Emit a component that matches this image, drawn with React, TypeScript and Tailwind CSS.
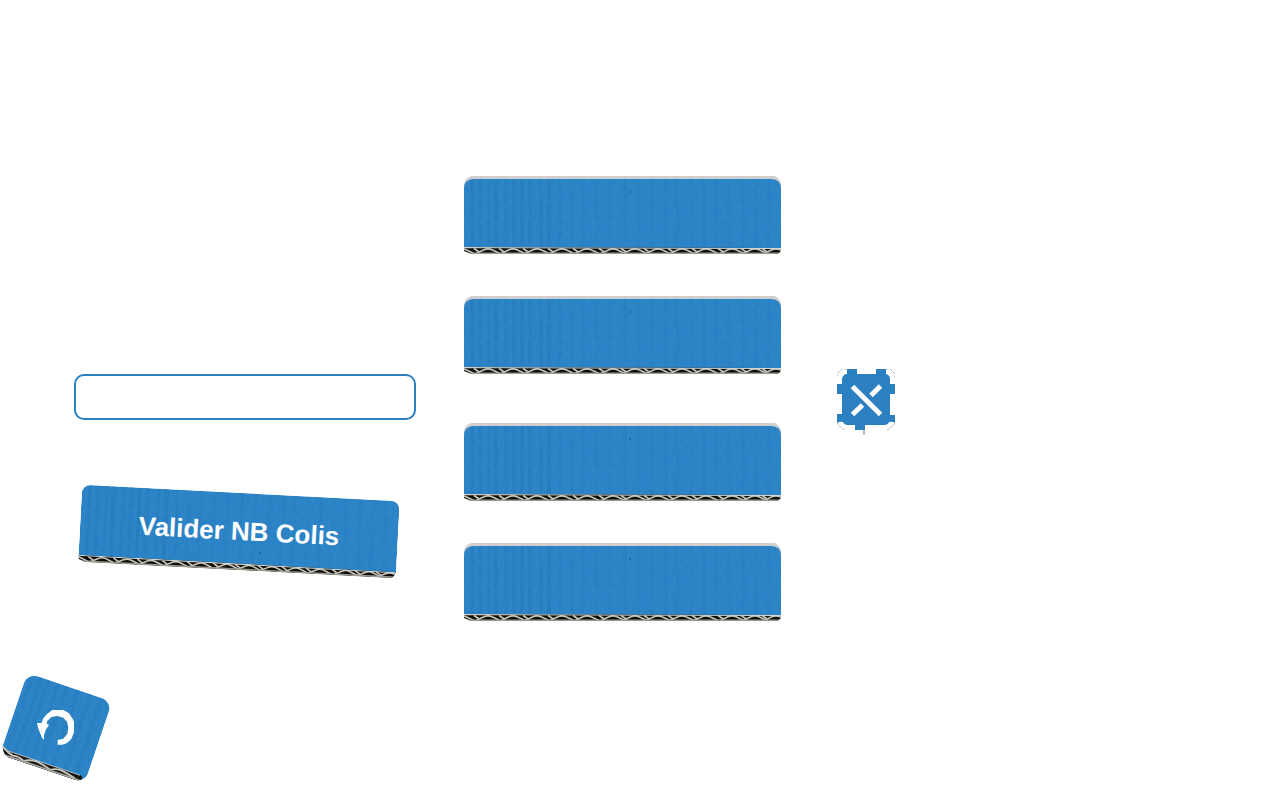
import { useId, useState } from "react";

const FLUTES = [
  -2, 24, 49, 73, 98, 123, 149, 171, 194, 218, 242, 268, 291, 312, 336,
];
const RIDGES = [
  8, 16, 25, 32, 42, 50, 58, 66, 77, 85, 96, 108, 119, 133, 146, 161, 174, 188,
  202, 213, 227, 240, 252, 265, 279, 292, 305,
];

function Grain({ id }: { id: string }) {
  return (
    <filter id={id} x="0" y="0" width="100%" height="100%">
      <feTurbulence
        type="fractalNoise"
        baseFrequency="0.3 0.18"
        numOctaves={3}
        seed={4}
      />
      <feColorMatrix values="0 0 0 0 0.05  0 0 0 0 0.28  0 0 0 0 0.52  1.2 0 0 0 -0.42" />
      <feComposite in2="SourceGraphic" operator="in" />
    </filter>
  );
}

function Cardboard({ topEdge = false }: { topEdge?: boolean }) {
  const id = useId().replace(/[^a-zA-Z0-9]/g, "");
  const face = topEdge
    ? "M0 73V13Q0 3 10 3H307Q317 3 317 13V73Z"
    : "M0 73V11Q0 1 10 1H308Q318 1 318 11V73Z";
  return (
    <svg
      viewBox="0 0 318 78"
      className="block h-[78px] w-full"
      aria-hidden="true"
    >
      <defs>
        <Grain id={`grain${id}`} />
        <clipPath id={`face${id}`}>
          <path d={face} />
        </clipPath>
        <clipPath id={`edge${id}`}>
          <path d="M0 71L317 72V74Q316 78 311 78H7L0 75Z" />
        </clipPath>
      </defs>
      {topEdge && (
        <path d="M0 12V7L2 3L7 0H311L315 3L317 7V14H0Z" fill="#cfcfcf" />
      )}
      <g clipPath={`url(#face${id})`}>
        <rect width="318" height="78" fill="#2b83c8" />
        {RIDGES.map((x, i) => (
          <path
            key={x}
            d={`M${x} 0V78`}
            stroke={i % 3 === 0 ? "#2377b8" : "#277bbd"}
            strokeWidth={i % 2 ? 4 : 3}
            opacity={x < 100 ? 0.55 : 0.3}
          />
        ))}
        <rect
          width="318"
          height="78"
          fill="#2b82c6"
          filter={`url(#grain${id})`}
          opacity="0.6"
        />
        <circle
          cx={topEdge ? 166 : 181}
          cy={topEdge ? 16 : 60}
          r="1"
          fill="#1764a4"
        />
      </g>
      <g clipPath={`url(#edge${id})`}>
        <rect y="70" width="318" height="9" fill="#0f0d0a" />
        {FLUTES.map((x) => (
          <path
            key={x}
            d={`M${x - 14} 72.5L${x - 8} 76.5M${x - 12} 77.5L${x - 4} 73.8Q${x} 72 ${x + 4} 73.8L${x + 12} 77.5`}
            fill="none"
            stroke="#c9c7bd"
            strokeWidth="1.6"
          />
        ))}
        <path d="M0 71.5L317 72.5" stroke="#d5d6d0" strokeWidth="1.3" />
        <path d="M0 77.2H317" stroke="#9a9a90" strokeWidth="1.6" />
      </g>
    </svg>
  );
}

function CrossIcon() {
  return (
    <svg
      viewBox="0 0 58 66"
      className="block h-[66px] w-[58px]"
      aria-hidden="true"
    >
      <path
        d="M0 8V5L5 0H10M49 0H53L58 5V9M0 53L2 57L8 61M50 61L56 57L58 54"
        fill="none"
        stroke="#b9b9b9"
        strokeWidth="1"
        strokeDasharray="3 1"
      />
      <path
        d="M10 0H20V5H39V0H49V5Q53 6 53 10V15H58V25H53V46H58V54Q55 52 52 53Q51 56 47 56H28V61H18V56H11Q7 56 6 53Q3 52 0 54V45H5V25H0V15H5V10Q6 5 10 5Z"
        fill="#2b80c2"
      />
      <path
        d="M15.5 17.5L43.5 45.5M43.5 17L34 26.5M15.5 45.5L25.5 36"
        fill="none"
        stroke="#fff"
        strokeWidth="5"
      />
      <path d="M27 61V66" stroke="#b9b9b9" strokeWidth="2" />
    </svg>
  );
}

function BackIcon() {
  return (
    <svg
      viewBox="0 0 112 110"
      className="block h-[110px] w-[112px]"
      aria-hidden="true"
    >
      <defs>
        <Grain id="backGrain" />
        <clipPath id="backShape">
          <rect x="-44.5" y="-42.5" width="89.5" height="86" rx="11" />
        </clipPath>
      </defs>
      <g transform="translate(56 55.5) rotate(18.7)" clipPath="url(#backShape)">
        <rect x="-45" y="-43" width="90" height="87" fill="#2b83c8" />
        {[-39, -30, -22, -12, -3, 9, 22, 34].map((x) => (
          <path
            key={x}
            d={`M${x} -43V43`}
            stroke="#2377b8"
            strokeWidth="4"
            opacity="0.35"
          />
        ))}
        <rect
          x="-45"
          y="-43"
          width="90"
          height="87"
          fill="#2b82c6"
          filter="url(#backGrain)"
          opacity="0.6"
        />
        <path
          d="M-45 34Q-40 38 -34 37.5H39Q42 38 41 44H-45Z"
          fill="#191612"
        />
        <path
          d="M-45 35Q-38 39 -32 40.5Q-26 39 -20 42Q-13 38 -7 38.5T8 42Q14 38 20 39T34 42"
          fill="none"
          stroke="#c9c7bd"
          strokeWidth="1.9"
        />
        <path d="M-38 37.5H38" stroke="#c3cdd0" strokeWidth="0.8" />
        <path d="M-45 42.6H39" stroke="#aaa89f" strokeWidth="1.8" />
      </g>
      <path
        d="M37 51H41.5L43.3 46.3L47.3 41.7L52.3 38H63.3L69 41.3L72.7 47L74 49.7V60.3L71.3 67L66.7 71.3L62.3 72.7H57.7V68L63.3 66.7L67.3 62L68.3 55.7L67 49.7L63.3 45.7L57.3 44L51.3 45L47.3 49L46.7 51.7L49 53L45.7 58L44 63V67.7L42 65.7L38 55.7Z"
        fill="#fff"
      />
    </svg>
  );
}

export default function App() {
  const [parcels, setParcels] = useState("");

  return (
    <div className="min-h-screen overflow-x-hidden bg-white font-['Liberation_Sans',Arial,sans-serif]">
      <main className="flex items-start gap-12 pt-44 pl-[74px]">
        <form
          className="mt-[198px] w-[342px] shrink-0"
          onSubmit={(event) => event.preventDefault()}
        >
          <input
            aria-label="Nombre de colis"
            value={parcels}
            onChange={(event) => setParcels(event.target.value)}
            className="block h-[46px] w-full rounded-[10px] border-2 border-[#2b80c2] bg-white px-3 text-2xl outline-none"
          />
          <button
            type="submit"
            className="mt-[72px] ml-1.5 grid w-[318px] rotate-3 cursor-pointer place-items-center"
          >
            <span className="col-start-1 row-start-1 w-full">
              <Cardboard />
            </span>
            <span className="z-10 col-start-1 row-start-1 text-[26px] leading-8 font-bold text-white">
              Valider NB Colis
            </span>
          </button>
        </form>

        <div className="flex w-[318px] shrink-0 flex-col gap-[42px]">
          {["1", "2", "3", "4"].map((slot) => (
            <button
              key={slot}
              type="button"
              aria-label={`Colis ${slot}`}
              className="block w-full cursor-pointer nth-3:mt-[7px]"
            >
              <Cardboard topEdge />
            </button>
          ))}
        </div>

        <button
          type="button"
          aria-label="Fermer"
          className="mt-[193px] ml-[7px] shrink-0 cursor-pointer"
        >
          <CrossIcon />
        </button>
      </main>

      <footer className="mt-[51px]">
        <button
          type="button"
          aria-label="Retour"
          className="block cursor-pointer"
        >
          <BackIcon />
        </button>
      </footer>
    </div>
  );
}
